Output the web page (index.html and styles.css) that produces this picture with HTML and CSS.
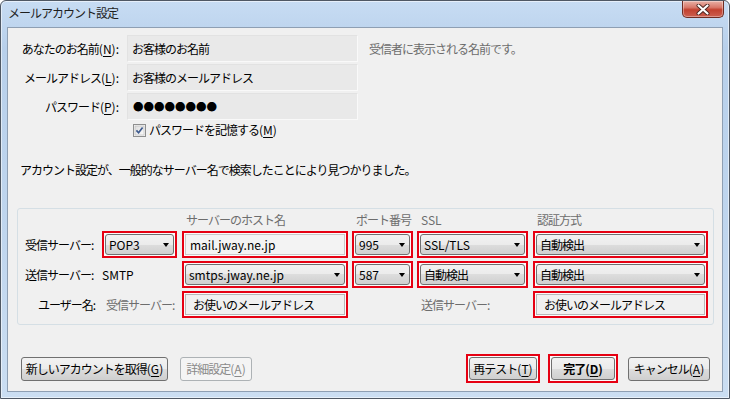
FILE: index.html
```html
<!DOCTYPE html>
<html lang="ja">
<head>
    <meta charset="UTF-8">
    <meta name="viewport" content="width=device-width, initial-scale=1.0">
    <title>メールアカウント設定</title>
    <link rel="stylesheet" href="styles.css">
</head>
<body>
<div class="window">
    <div class="titlebar">
        <span class="title">メールアカウント設定</span>
        <div class="close">
            <svg width="14" height="11" viewBox="0 0 14 11">
                <path d="M2.5 1.5 L11.5 9.5 M11.5 1.5 L2.5 9.5" stroke="#4a2520" stroke-width="4" stroke-linecap="round"/>
                <path d="M2.5 1.5 L11.5 9.5 M11.5 1.5 L2.5 9.5" stroke="#ffffff" stroke-width="2.2" stroke-linecap="round"/>
            </svg>
        </div>
    </div>

    <div class="client">
        <div class="identity">
            <label class="lbl">あなたのお名前<span class="key">(<u>N</u>):</span></label>
            <div class="field">お客様のお名前</div>
            <span class="hint">受信者に表示される名前です。</span>

            <label class="lbl">メールアドレス<span class="key">(<u>L</u>):</span></label>
            <div class="field">お客様のメールアドレス</div>
            <span></span>

            <label class="lbl">パスワード<span class="key">(<u>P</u>):</span></label>
            <div class="field dots">●●●●●●●●</div>
            <span></span>
        </div>

        <div class="remember">
            <svg class="check" width="13" height="13" viewBox="0 0 13 13">
                <defs>
                    <linearGradient id="cb" x1="0" y1="0" x2="1" y2="1">
                        <stop offset="0" stop-color="#dcdcdc"/>
                        <stop offset="1" stop-color="#fbfbfb"/>
                    </linearGradient>
                </defs>
                <rect x="0.5" y="0.5" width="12" height="12" fill="#f4f4f4" stroke="#8e8f8f"/>
                <rect x="2" y="2" width="9" height="9" fill="url(#cb)" stroke="#b9b9b9" stroke-width="0.6"/>
                <path d="M3.4 6.4 L5.6 8.8 L9.6 3.6" fill="none" stroke="#3d5a8e" stroke-width="1.7"/>
            </svg>
            <span>パスワードを記憶する<span class="key">(<u>M</u>)</span></span>
        </div>

        <p class="message">アカウント設定が、一般的なサーバー名で検索したことにより見つかりました。</p>

        <div class="servers">
            <span></span>
            <span></span>
            <span class="head">サーバーのホスト名</span>
            <span class="head">ポート番号</span>
            <span class="head latin">SSL</span>
            <span class="head">認証方式</span>

            <span class="row-label">受信サーバー:</span>
            <div class="mark w-type"><div class="select latin">POP3<i class="arrow"></i></div></div>
            <div class="mark w-host"><div class="input latin">mail.jway.ne.jp</div></div>
            <div class="mark w-port"><div class="select latin">995<i class="arrow"></i></div></div>
            <div class="mark w-ssl"><div class="select latin">SSL/TLS<i class="arrow"></i></div></div>
            <div class="mark w-auth"><div class="select">自動検出<i class="arrow"></i></div></div>

            <span class="row-label">送信サーバー:</span>
            <span class="plain latin">SMTP</span>
            <div class="mark w-host"><div class="select latin">smtps.jway.ne.jp<i class="arrow"></i></div></div>
            <div class="mark w-port"><div class="select latin">587<i class="arrow"></i></div></div>
            <div class="mark w-ssl"><div class="select">自動検出<i class="arrow"></i></div></div>
            <div class="mark w-auth"><div class="select">自動検出<i class="arrow"></i></div></div>

            <span class="row-label user">ユーザー名:</span>
            <span class="sub">受信サーバー:</span>
            <div class="mark w-host"><div class="input user-val">お使いのメールアドレス</div></div>
            <span></span>
            <span class="sub">送信サーバー:</span>
            <div class="mark w-auth"><div class="input user-val">お使いのメールアドレス</div></div>
        </div>

        <div class="actions">
            <button class="btn b-new">新しいアカウントを取得<span class="key">(<u>G</u>)</span></button>
            <button class="btn b-adv" disabled>詳細設定<span class="key">(<u>A</u>)</span></button>
            <span class="spacer"></span>
            <div class="mark b-wrap-retest"><button class="btn">再テスト<span class="key">(<u>T</u>)</span></button></div>
            <div class="mark b-wrap-done"><button class="btn strong">完了<span class="key">(<u>D</u>)</span></button></div>
            <button class="btn b-cancel">キャンセル<span class="key">(<u>A</u>)</span></button>
        </div>
    </div>
</div>
</body>
</html>
```

FILE: styles.css
```css
* {
    box-sizing: border-box;
}

body {
    margin: 0;
    overflow: hidden;
    font-family: "Noto Sans CJK JP", "Noto Sans", sans-serif;
    font-size: 12px;
    line-height: 16px;
    letter-spacing: -1px;
    color: #000;
}

u {
    text-decoration: underline;
    text-underline-offset: 2px;
}

.latin,
.key {
    letter-spacing: 0;
}

/* window frame */
.window {
    width: 730px;
    height: 399px;
    display: flex;
    flex-direction: column;
    border: 1px solid #4f5864;
    border-radius: 6px 6px 0 0;
    background: linear-gradient(180deg, #c7dcf3 0%, #b8d0eb 12%, #c0d6ee 60%, #cbdef2 100%);
    box-shadow: inset 0 0 0 1px rgba(255, 255, 255, 0.55);
}

.titlebar {
    height: 26px;
    display: flex;
    justify-content: space-between;
    align-items: flex-start;
    padding-left: 7px;
}

.title {
    margin-top: 4px;
    color: #1e1e1e;
}

.close {
    width: 42px;
    height: 17px;
    margin-right: 5px;
    display: flex;
    justify-content: center;
    align-items: center;
    border: 1px solid #6f2c23;
    border-top: none;
    border-radius: 0 0 5px 5px;
    background: linear-gradient(180deg, #e8b1a6 0%, #d8786a 40%, #c2412f 55%, #cc5f50 100%);
    box-shadow: inset 0 0 0 1px rgba(255, 255, 255, 0.35);
}

.client {
    flex: 1;
    margin: 0 6px 6px;
    display: flex;
    flex-direction: column;
    border: 1px solid #8e9fb3;
    background: #f0f0f0;
}

/* name / mail / password */
.identity {
    display: grid;
    grid-template-columns: 101px 231px 1fr;
    grid-auto-rows: 27px;
    column-gap: 8px;
    row-gap: 2px;
    padding: 7px 0 0 10px;
    align-items: center;
}

.lbl {
    text-align: right;
    white-space: nowrap;
}

.field {
    height: 27px;
    display: flex;
    align-items: center;
    padding-left: 4px;
    background: #e9e9e9;
    border: 1px solid #f9f9f9;
    border-top-color: #e2e2e2;
    border-left-color: #e2e2e2;
}

.dots {
    font-size: 10.5px;
    letter-spacing: 0;
    padding-left: 5px;
}

.hint {
    padding-left: 3px;
    color: #6d6d6d;
}

.remember {
    display: flex;
    align-items: center;
    gap: 3px;
    height: 14px;
    margin-top: 3px;
    padding-left: 125px;
}

.message {
    margin: 25px 0 0 12px;
}

/* server settings group */
.servers {
    height: 117px;
    margin: 30px 8px 0 9px;
    padding: 3px 0 0 7px;
    display: grid;
    grid-template-columns: 77px 80px 170px 65px 116px 175px;
    grid-template-rows: 16px 27px 27px 27px;
    row-gap: 3px;
    align-items: center;
    border: 1px solid #d5dfe5;
    border-radius: 3px;
}

.head {
    padding-left: 4px;
    color: #6d6d6d;
}

.row-label.user {
    justify-self: end;
    padding-right: 7px;
}

.sub {
    padding-left: 4px;
    color: #6d6d6d;
    white-space: nowrap;
}

.mark {
    height: 27px;
    padding: 1px;
    border: 2px solid #e60012;
    background: #fbfbfb;
}

.w-type { width: 75px; }
.w-host { width: 166px; }
.w-port { width: 61px; }
.w-ssl  { width: 111px; }
.w-auth { width: 175px; }

.select {
    height: 100%;
    display: flex;
    justify-content: space-between;
    align-items: center;
    padding: 0 4px 0 3px;
    border: 1px solid #707070;
    border-radius: 3px;
    background: linear-gradient(180deg, #f2f2f2 0%, #ebebeb 50%, #dddddd 50%, #cfcfcf 100%);
}

.arrow {
    width: 0;
    height: 0;
    border-top: 4px solid #000;
    border-left: 3.5px solid transparent;
    border-right: 3.5px solid transparent;
}

.input {
    height: 100%;
    display: flex;
    align-items: center;
    padding-left: 4px;
    border: 1px solid #c9c9c9;
    background: #f3f3f3;
}

.user-val {
    padding-left: 7px;
    border-color: #b8b8b8;
    background: #f0f0f0;
}

/* buttons */
.actions {
    margin-top: auto;
    display: flex;
    align-items: center;
    padding: 0 12px 8px 13px;
}

.btn {
    height: 24px;
    padding: 0;
    font: inherit;
    letter-spacing: -1px;
    color: #000;
    border: 1px solid #707070;
    border-radius: 3px;
    background: linear-gradient(180deg, #f2f2f2 0%, #ebebeb 50%, #dddddd 50%, #cfcfcf 100%);
}

.btn:disabled {
    color: #8a8a8a;
    border-color: #adb2b5;
    background: #f4f4f4;
}

.b-new { width: 147px; }
.b-adv { width: 72px; margin-left: 12px; }
.b-cancel { width: 82px; margin-left: 10px; }

.spacer {
    flex: 1;
}

.mark .btn {
    width: 100%;
    height: 100%;
}

.b-wrap-retest {
    width: 74px;
    height: 29px;
}

.b-wrap-done {
    width: 70px;
    height: 29px;
    margin-left: 8px;
}

.strong {
    font-weight: bold;
}
```
